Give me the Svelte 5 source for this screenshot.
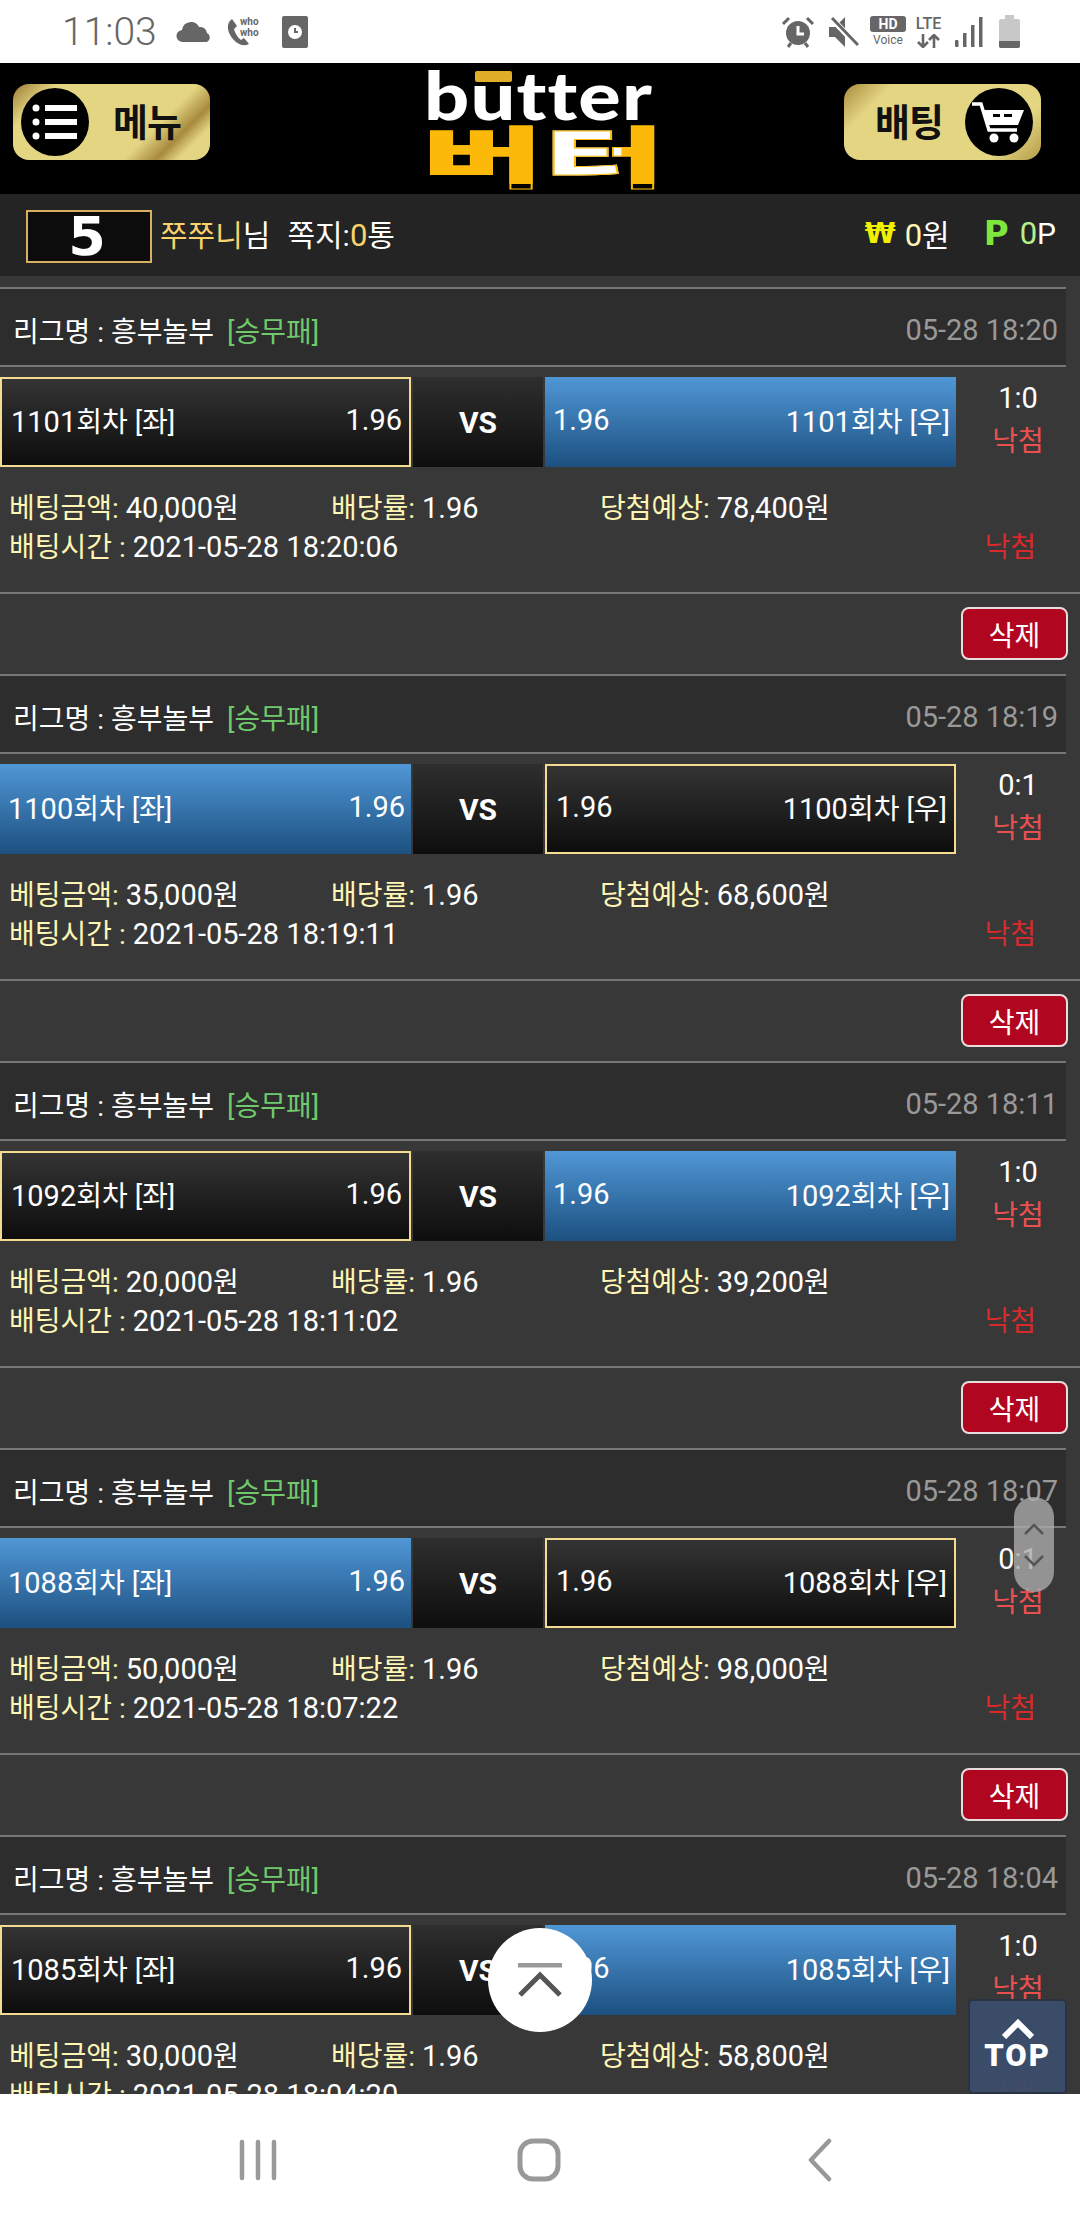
<script>
  const bets = [
    { round: 1101, picked: "left", score: "1:0", amount: "40,000", win: "78,400", time: "18:20", placed: "18:20:06" },
    { round: 1100, picked: "right", score: "0:1", amount: "35,000", win: "68,600", time: "18:19", placed: "18:19:11" },
    { round: 1092, picked: "left", score: "1:0", amount: "20,000", win: "39,200", time: "18:11", placed: "18:11:02" },
    { round: 1088, picked: "right", score: "0:1", amount: "50,000", win: "98,000", time: "18:07", placed: "18:07:22" },
    { round: 1085, picked: "left", score: "1:0", amount: "30,000", win: "58,800", time: "18:04", placed: "18:04:20" }
  ];
</script>

<div class="phone">
  <div class="status">
    <span class="clock">11:03</span>
    <svg class="ic" width="36" height="22" viewBox="0 0 36 22"><path d="M7 21a6 6 0 0 1-1-12 9 9 0 0 1 17-3 7 7 0 0 1 8 6 5 5 0 0 1 0 9z" fill="#666" /></svg>
    <span class="whowho">
      <svg width="28" height="30" viewBox="0 0 28 30"><path d="M6 2 C0 6 1 14 6 21 C11 27 17 30 23 27 L18 21 L15 23 C12 21 9 16 8 12 L11 9 Z" fill="#666" /></svg>
      <span class="who">who<br />who</span>
    </span>
    <svg class="ic app" width="26" height="32" viewBox="0 0 26 32"><rect width="26" height="32" rx="2" fill="#666" /><circle cx="13" cy="16" r="7" fill="#fff" /><path d="M13 12v4h3" stroke="#666" stroke-width="2" fill="none" /></svg>

    <span class="spacer"></span>

    <svg width="34" height="32" viewBox="0 0 34 32"><circle cx="17" cy="17" r="12" fill="#666" /><path d="M17 10v8h6" stroke="#fff" stroke-width="3" fill="none" /><path d="M2 8l6-6M32 8l-6-6M7 31l3-4M27 31l-3-4" stroke="#666" stroke-width="3" /></svg>
    <svg class="mute" width="30" height="32" viewBox="0 0 30 32"><path d="M0 11h6l10-10v30l-10-10h-6z" fill="#666" /><path d="M3 3l26 27" stroke="#fff" stroke-width="6" /><path d="M3 2l26 27" stroke="#666" stroke-width="3" /></svg>
    <span class="hd"><b>HD</b><i>Voice</i></span>
    <span class="lte"><b>LTE</b>
      <svg width="24" height="14" viewBox="0 0 24 14"><path d="M6 0v12M1 8l5 5 5-5M17 14V2M12 6l5-5 5 5" stroke="#666" stroke-width="2.6" fill="none" /></svg>
    </span>
    <svg class="signal" width="28" height="30" viewBox="0 0 28 30"><g fill="#666"><rect x="0" y="23" width="3.5" height="7" rx="1" /><rect x="8" y="16" width="3.5" height="14" /><rect x="16" y="8" width="3.5" height="22" /><rect x="24" y="0" width="3.5" height="30" /></g></svg>
    <svg class="battery" width="21" height="33" viewBox="0 0 21 33"><path d="M6 0h9v4h4a2 2 0 0 1 2 2v25a2 2 0 0 1-2 2H2a2 2 0 0 1-2-2V6a2 2 0 0 1 2-2h4z" fill="#c8c8c8" /><path d="M0 26h21v5a2 2 0 0 1-2 2H2a2 2 0 0 1-2-2z" fill="#666" /></svg>
  </div>

  <header class="top">
    <div class="gold menu">
      <span class="disc">
        <svg width="46" height="38" viewBox="0 0 46 38"><g fill="#fff"><circle cx="4" cy="5" r="3.5" /><circle cx="4" cy="19" r="3.5" /><circle cx="4" cy="33" r="3.5" /><rect x="13" y="2" width="32" height="6" /><rect x="13" y="16" width="32" height="6" /><rect x="13" y="30" width="32" height="6" /></g></svg>
      </span>
      <span class="gold-label">메뉴</span>
    </div>

    <div class="logo">
      <span class="logo-en">butter</span>
      <span class="logo-bar"></span>
      <span class="logo-ko">버터</span>
    </div>

    <div class="gold bet">
      <span class="gold-label">배팅</span>
      <span class="disc">
        <svg width="58" height="42" viewBox="0 0 58 42"><path d="M2 3h9l8 26h28" stroke="#fff" stroke-width="3.5" fill="none" /><path d="M13 9h41l-6 15H18z M23 13v3h7v-3z M34 13v3h8v-3z" fill="#fff" fill-rule="evenodd" /><circle cx="24" cy="37" r="4.5" fill="#fff" /><circle cx="44" cy="37" r="4.5" fill="#fff" /></svg>
      </span>
    </div>
  </header>

  <div class="info">
    <div class="rank"><span>5</span></div>
    <span class="user"><em>쭈쭈니</em>님</span>
    <span class="msg">쪽지:<em>0</em>통</span>
    <span class="spacer"></span>
    <span class="won">₩</span>
    <span class="money"><em>0</em>원</span>
    <span class="point">P</span>
    <span class="money pts"><em>0</em>P</span>
  </div>

  <main class="list">
    {#each bets as b}
      <section class="card">
        <div class="league">
          <span>리그명 : 흥부놀부 <em>[승무패]</em></span>
          <span class="date num">05-28 {b.time}</span>
        </div>

        <div class="match">
          <div class="team left" class:picked={b.picked === "left"}>
            <span><span class="num">{b.round}</span>회차 [좌]</span><span class="num">1.96</span>
          </div>
          <div class="vs">VS</div>
          <div class="team right" class:picked={b.picked === "right"}>
            <span class="num">1.96</span><span><span class="num">{b.round}</span>회차 [우]</span>
          </div>
          <div class="result">
            <span class="num">{b.score}</span>
            <span class="lost">낙첨</span>
          </div>
        </div>

        <div class="details">
          <div class="line">
            <span class="c1"><em>베팅금액:</em> <span class="num">{b.amount}</span>원</span>
            <span class="c2"><em>배당률:</em> <span class="num">1.96</span></span>
            <span><em>당첨예상:</em> <span class="num">{b.win}</span>원</span>
          </div>
          <div class="line">
            <span><em>배팅시간 :</em> <span class="num">2021-05-28 {b.placed}</span></span>
            <span class="lost2">낙첨</span>
          </div>
        </div>

        <div class="actions">
          <button class="del">삭제</button>
        </div>
      </section>
    {/each}

    <div class="handle">
      <svg width="22" height="14" viewBox="0 0 22 14"><path d="M2 12l9-9 9 9" stroke="#555" stroke-width="2.5" fill="none" /></svg>
      <svg width="22" height="14" viewBox="0 0 22 14"><path d="M2 2l9 9 9-9" stroke="#555" stroke-width="2.5" fill="none" /></svg>
    </div>

    <div class="up">
      <svg width="44" height="34" viewBox="0 0 44 34"><path d="M0 2h44" stroke="#999" stroke-width="5" /><path d="M2 32l20-20 20 20" stroke="#555" stroke-width="5" fill="none" /></svg>
    </div>

    <div class="totop">
      <svg width="32" height="20" viewBox="0 0 32 20"><path d="M2 18L16 4l14 14" stroke="#fff" stroke-width="6" fill="none" /></svg>
      <span>TOP</span>
    </div>
  </main>

  <nav class="softkeys">
    <svg width="38" height="42" viewBox="0 0 38 42"><path d="M3 3v36M19 3v36M35 3v36" stroke="#999" stroke-width="4.5" stroke-linecap="round" /></svg>
    <svg width="44" height="44" viewBox="0 0 44 44"><rect x="3" y="3" width="38" height="38" rx="13" stroke="#999" stroke-width="5" fill="none" /></svg>
    <svg width="26" height="44" viewBox="0 0 26 44"><path d="M22 3L4 22l18 19" stroke="#999" stroke-width="4.5" stroke-linecap="round" stroke-linejoin="round" fill="none" /></svg>
  </nav>
</div>

<style>
  :global(body) {
    margin: 0;
    background: #383838;
  }

  .phone {
    width: 1080px;
    height: 2220px;
    display: flex;
    flex-direction: column;
    overflow: hidden;
    font-family: Roboto, "Noto Sans CJK KR", sans-serif;
    color: #fff;
  }

  em {
    font-style: normal;
  }

  .num {
    font-size: 29px;
  }

  .spacer {
    flex: 1;
  }

  /* status bar */
  .status {
    height: 63px;
    flex: none;
    background: #fff;
    display: flex;
    align-items: center;
    padding: 0 60px 0 62px;
    box-sizing: border-box;
    color: #666;
  }

  .clock {
    font-size: 39px;
    font-weight: 300;
    width: 114px;
  }

  .whowho {
    display: flex;
    margin-left: 14px;
    align-items: flex-start;
    position: relative;
    width: 40px;
    height: 30px;
  }

  .who {
    position: absolute;
    left: 14px;
    top: -1px;
    font-size: 10px;
    line-height: 11px;
    font-weight: 700;
  }

  .app {
    margin-left: 16px;
  }

  .mute {
    margin-left: 14px;
  }

  .hd {
    margin-left: 11px;
    width: 36px;
    display: flex;
    flex-direction: column;
    align-items: center;
  }

  .hd b {
    width: 36px;
    height: 16px;
    background: #666;
    color: #fff;
    border-radius: 3px;
    font-size: 14px;
    line-height: 16px;
    text-align: center;
  }

  .hd i {
    font-style: normal;
    font-size: 12px;
    line-height: 16px;
  }

  .lte {
    margin-left: 7px;
    width: 31px;
    display: flex;
    flex-direction: column;
    align-items: center;
    gap: 2px;
  }

  .lte b {
    font-size: 16px;
    line-height: 16px;
    font-weight: 500;
  }

  .signal {
    margin-left: 11px;
  }

  .battery {
    margin-left: 16px;
  }

  /* header */
  .top {
    height: 131px;
    flex: none;
    background: #000;
    display: flex;
    justify-content: space-between;
    align-items: flex-start;
    padding: 21px 39px 0 13px;
    box-sizing: border-box;
  }

  .gold {
    width: 197px;
    height: 76px;
    border-radius: 16px;
    display: flex;
    align-items: center;
    box-sizing: border-box;
    color: #111;
  }

  .menu {
    padding-left: 8px;
    gap: 24px;
    background: linear-gradient(135deg, #9a7a35 0%, #e3d581 16%, #e3d581 68%, #a88a3e 80%, #e3d581 88%);
  }

  .bet {
    padding-right: 8px;
    justify-content: flex-end;
    gap: 22px;
    background: linear-gradient(135deg, #a88a3e 0%, #e3d581 18%, #e3d581 80%, #b49a48 100%);
  }

  .disc {
    width: 68px;
    height: 68px;
    border-radius: 50%;
    background: #000;
    display: flex;
    align-items: center;
    justify-content: center;
  }

  .gold-label {
    font-size: 38px;
    font-weight: 700;
    letter-spacing: -1px;
    transform: translateY(-3px);
  }

  .logo {
    position: relative;
    width: 228px;
    height: 131px;
    margin-top: -21px;
    margin-left: 28px;
  }

  .logo-bar {
    position: absolute;
    left: 48px;
    top: 8px;
    width: 37px;
    height: 11px;
    border-radius: 2px;
    background: #e0ae28;
  }

  .logo-en {
    position: absolute;
    left: -3px;
    top: 5px;
    font-family: Lato, sans-serif;
    font-weight: 900;
    font-size: 66px;
    line-height: 54px;
    letter-spacing: 1px;
    transform: scaleX(1.2);
    transform-origin: 0 0;
    color: #fff;
  }

  .logo-ko {
    position: absolute;
    left: -5px;
    top: 60px;
    width: 127px;
    font-family: "Noto Sans CJK KR", sans-serif;
    font-weight: 900;
    font-size: 66px;
    line-height: 61px;
    white-space: nowrap;
    transform: scaleX(2);
    transform-origin: 0 0;
    color: transparent;
    background: linear-gradient(90deg, #fcb90a 0 49%, #fff 50% 78%, #fcb90a 79%);
    -webkit-background-clip: text;
    background-clip: text;
    -webkit-text-stroke: 1px #fcb90a;
  }

  /* user bar */
  .info {
    height: 82px;
    flex: none;
    background: #242424;
    display: flex;
    align-items: center;
    padding: 0 24px 4px 26px;
    box-sizing: border-box;
    font-size: 30px;
  }

  .rank {
    width: 126px;
    height: 53px;
    box-sizing: border-box;
    border: 2px solid #d8b060;
    background: #0c0c0c;
    text-align: center;
    margin-right: 8px;
    margin-top: 6px;
  }

  .rank span {
    display: inline-block;
    font-family: "DejaVu Sans", sans-serif;
    font-size: 54px;
    line-height: 49px;
    font-weight: 700;
    margin-left: -4px;
    filter: blur(0.7px);
  }

  .user em,
  .msg em {
    color: #f8d26c;
  }

  .msg {
    margin-left: 17px;
  }

  .msg em,
  .money em {
    font-size: 31px;
  }

  .won {
    font-family: "DejaVu Sans", sans-serif;
    font-weight: 700;
    color: #f0f000;
    font-size: 28px;
    margin-right: 9px;
  }

  .money em {
    color: #fdf6b4;
  }

  .point {
    margin-left: 34px;
    margin-right: 11px;
    color: #7fe63c;
    font-family: "DejaVu Sans", sans-serif;
    font-weight: 700;
    font-size: 34px;
  }

  .pts em {
    color: #b6f08a;
  }

  /* bet list */
  .list {
    flex: 1;
    position: relative;
    overflow: hidden;
    background: #383838;
    padding-top: 11px;
    font-size: 28px;
  }

  .card {
    height: 387px;
  }

  .league {
    width: 1066px;
    height: 80px;
    box-sizing: border-box;
    border-top: 2px solid #777;
    border-bottom: 2px solid #777;
    background: #2d2d2d;
    display: flex;
    align-items: center;
    justify-content: space-between;
    padding: 5px 8px 0 13px;
    white-space: nowrap;
  }

  .league em {
    color: #70c96c;
    margin-left: 6px;
  }

  .date {
    color: #999;
  }

  .match {
    height: 90px;
    margin-top: 10px;
    display: grid;
    grid-template-columns: 411px 130px 411px 120px;
    gap: 0 2px;
  }

  .team {
    display: flex;
    align-items: center;
    justify-content: space-between;
    box-sizing: border-box;
    padding: 0 6px 5px 8px;
    background: linear-gradient(#5097d6, #1c5080);
    white-space: nowrap;
  }

  .team.picked {
    border: 2px solid #f3dc8f;
    padding: 0 7px 5px 9px;
    background: linear-gradient(#343434, #0d0d0d);
  }

  .vs {
    display: flex;
    align-items: center;
    justify-content: center;
    font-weight: 700;
    font-size: 30px;
    background: linear-gradient(#2e2e2e, #0e0e0e);
  }

  .result {
    display: flex;
    flex-direction: column;
    align-items: center;
    line-height: 43px;
  }

  .lost {
    color: #ea5050;
  }

  .details {
    margin-top: 22px;
    height: 103px;
    line-height: 39px;
    padding-left: 9px;
    border-bottom: 2px solid #777;
  }

  .line {
    display: flex;
    white-space: nowrap;
  }

  .line em {
    color: #fdf6b4;
  }

  .c1 {
    width: 322px;
  }

  .c2 {
    width: 269px;
  }

  .lost2 {
    margin-left: auto;
    margin-right: 44px;
    color: #d82a2a;
  }

  .actions {
    display: flex;
    justify-content: flex-end;
    padding: 13px 12px 0 0;
  }

  .del {
    width: 107px;
    height: 53px;
    border: 2px solid #e8dcdc;
    border-radius: 8px;
    background: #b10620;
    color: #fff;
    font: inherit;
    padding: 0;
  }

  /* floating stuff */
  .handle {
    position: absolute;
    left: 1014px;
    top: 1221px;
    width: 40px;
    height: 95px;
    border-radius: 20px;
    background: rgba(170, 170, 170, 0.8);
    display: flex;
    flex-direction: column;
    align-items: center;
    justify-content: center;
    gap: 18px;
  }

  .up {
    position: absolute;
    left: 488px;
    top: 1652px;
    width: 104px;
    height: 104px;
    border-radius: 50%;
    background: #fff;
    display: flex;
    align-items: center;
    justify-content: center;
  }

  .totop {
    position: absolute;
    left: 968px;
    top: 1723px;
    width: 99px;
    height: 95px;
    border-radius: 5px;
    background: rgba(59, 77, 107, 0.95);
    border: 2px solid #2a3344;
    box-sizing: border-box;
    display: flex;
    flex-direction: column;
    align-items: center;
    padding-top: 18px;
    font-size: 31px;
    line-height: 34px;
    font-weight: 900;
    letter-spacing: 2px;
  }

  .softkeys {
    height: 126px;
    flex: none;
    background: #fff;
    display: grid;
    grid-template-columns: repeat(3, 281px);
    justify-items: center;
    align-items: center;
    justify-content: start;
    padding: 6px 0 0 117px;
    box-sizing: border-box;
  }
</style>
